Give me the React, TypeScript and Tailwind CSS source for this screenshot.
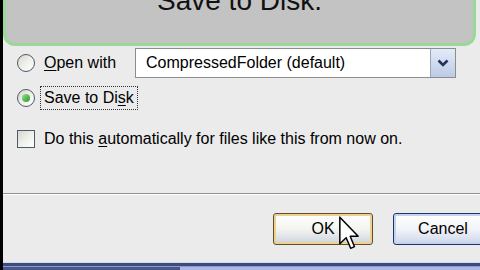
import React from "react";

const Radio = ({ checked = false }: { checked?: boolean }) => (
  <span className="flex h-[18px] w-[18px] shrink-0 items-center justify-center rounded-full border border-[#4d5b66] bg-gradient-to-br from-[#d6d6ce] via-[#f0f0ea] to-white">
    {checked && (
      <span className="h-[8px] w-[8px] rounded-full bg-gradient-to-br from-[#8fe08f] to-[#239a23]" />
    )}
  </span>
);

const Checkbox = () => (
  <span className="h-[18px] w-[18px] shrink-0 border border-[#4d5b66] bg-gradient-to-br from-[#d6d6ce] via-[#f0f0ea] to-white" />
);

const Cursor = () => (
  <svg
    className="absolute left-[336px] top-[216px]"
    width="20"
    height="34"
    viewBox="0 0 12 20"
  >
    <path
      d="M0.5 0.5 L0.5 16.5 L4.3 12.8 L7 19.2 L9.3 18.2 L6.7 12 L11.5 12 Z"
      fill="#ffffff"
      stroke="#000000"
      strokeWidth="0.9"
      strokeLinejoin="round"
    />
  </svg>
);

export default function App() {
  return (
    <div className="relative h-[270px] w-[480px] overflow-hidden border-l-[3px] border-black bg-[#ebebeb] font-['Liberation_Sans',Arial,sans-serif] text-[16px] text-black">
      {/* callout */}
      <div className="mr-[4px] flex h-[46px] justify-center overflow-hidden rounded-b-[12px] border-[3px] border-t-0 border-[#9bd79b] bg-[#c3c3c3]">
        <span className="-mt-[13px] text-[28px] leading-[28px] text-[#111]">Save to Disk.</span>
      </div>

      {/* open with */}
      <div className="mt-[2px] flex h-[30px] items-center pl-[14px]">
        <Radio />
        <span className="ml-[9px] w-[91px]">
          <span className="underline underline-offset-2">O</span>pen with
        </span>
        <div className="flex h-[30px] w-[321px] items-stretch border border-[#8d8d8d] bg-white">
          <span className="flex flex-1 items-center pl-[10px]">CompressedFolder (default)</span>
          <span className="flex w-[25px] items-center justify-center border-l border-[#9aa4b4] bg-gradient-to-b from-[#e3ebf8] to-[#bccbe6]">
            <svg width="12" height="9" viewBox="0 0 12 9">
              <path d="M1.5 1.5 L6 6 L10.5 1.5" fill="none" stroke="#25325a" strokeWidth="2.6" />
            </svg>
          </span>
        </div>
      </div>

      {/* save to disk */}
      <div className="mt-[8px] flex h-[24px] items-center pl-[14px]">
        <Radio checked />
        <span className="ml-[5px] flex h-[24px] items-center border border-dotted border-[#333] px-[3px]">
          Save to Di<span className="underline underline-offset-2">s</span>k
        </span>
      </div>

      {/* checkbox */}
      <div className="mt-[20px] flex h-[18px] items-center pl-[14px]">
        <Checkbox />
        <span className="ml-[9px]">
          Do this <span className="underline underline-offset-2">a</span>utomatically for files like this from now on.
        </span>
      </div>

      {/* separator */}
      <div className="mt-[45px] h-[1px] bg-[#8f8f8f]" />
      <div className="h-[1px] bg-white" />

      {/* buttons */}
      <div className="mt-[18px] flex gap-[20px] pl-[270px]">
        <button className="flex h-[32px] w-[100px] shrink-0 items-center justify-center rounded-[3px] border border-[#5e4e2e] bg-gradient-to-b from-white via-[#f4f4f0] to-[#cdd3e0] shadow-[inset_0_0_0_2px_#efd08e]">
          OK
        </button>
        <button className="flex h-[32px] w-[100px] shrink-0 items-center justify-center rounded-[3px] border border-[#1f3566] bg-gradient-to-b from-white via-[#f2f4f8] to-[#cdd6ea] shadow-[inset_0_0_0_2px_#c2d2f0]">
          Cancel
        </button>
      </div>

      {/* window bottom edge */}
      <div className="mt-[17px] h-[1px] bg-[#d2dbf0]" />
      <div className="h-[3px] bg-[#3e4c7c]" />
      <div className="h-[1px] bg-[#8e9ac8]" />
      <div className="flex h-[3px]">
        <div className="w-[177px] bg-[#4a5889]" />
        <div className="flex-1 bg-[#aeb8e4]" />
      </div>

      <Cursor />
    </div>
  );
}
